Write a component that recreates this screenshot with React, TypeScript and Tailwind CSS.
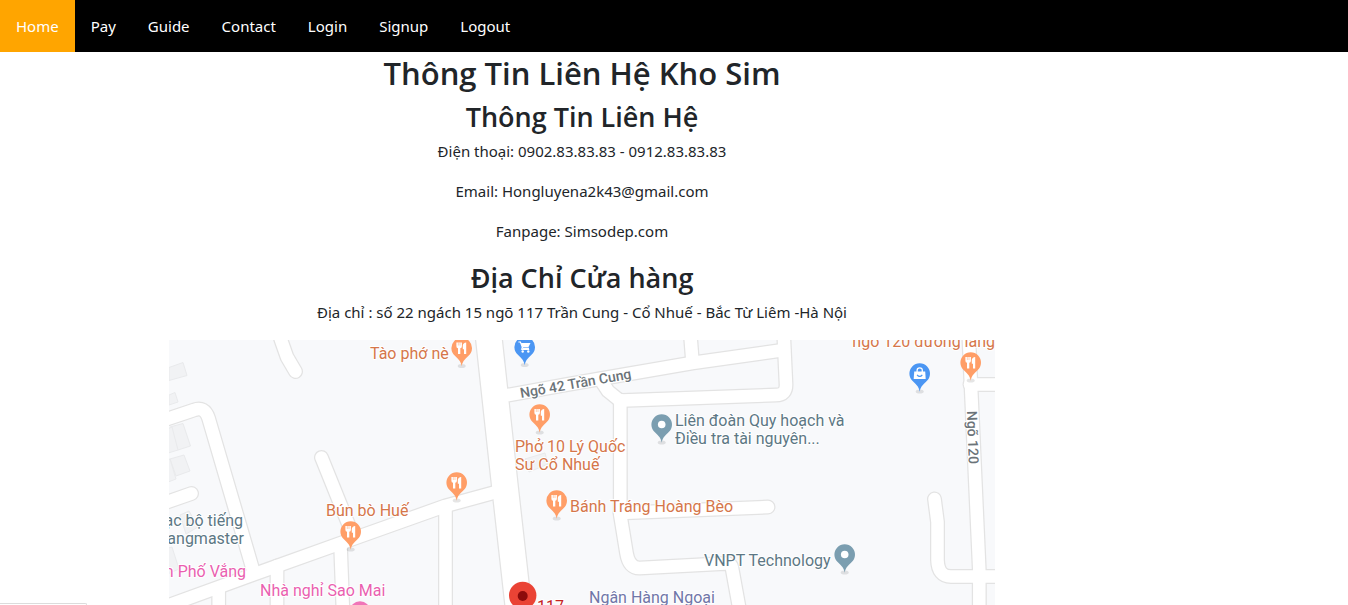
import type { ReactNode } from "react";

const NAV_ITEMS = ["Home", "Pay", "Guide", "Contact", "Login", "Signup", "Logout"];

const NARROW_ROADS = [
  "M278 330 L281 340 L287 357 L295.5 371.5",
  "M160 421.5 L194 410 Q204.500 406 208.500 418 L253 570",
  "M160 504.500 L191.500 493.500",
  "M321.500 457.500 L352 533",
  "M160 608.500 L252 575 L365 534.500 L445 506 L500 491",
  "M218.700 588 V612",
  "M277 566 V612",
  "M340.500 545 L343 612",
  "M445.500 508 V612",
  "M500 396.500 L570 384 L692 363 L784 350",
  "M690 330 L692.500 362",
  "M783.500 330 L786 384 Q786.500 395 776 395 L622 400.500",
  "M600 379 L608 391 L620.300 401",
  "M620.300 400 V515 L626.500 553 Q629 568.500 640 568 L725 563.500 Q731 563 732 568 L740 612",
  "M620 513 L768 507",
  "M968.500 330 L979.300 570 V612",
  "M970 384.500 H1004",
  "M934.500 499 L937.500 522 V560 Q938 576.500 951 576.500 H1004",
];
const WIDE_ROAD = "M486 312 L489 340 L505 487 L519 612";

const BUILDINGS = [
  "169,367.500 183,362.500 187,375.500 169,380.500",
  "169,395 175,392.500 178,402 169,405",
  "170,427 183,423.500 190.500,446 178,450",
  "165,430 172,427 178,450 165,454",
  "170,459 184,455 190,471 176,476",
  "163,461 170,459 176,479 163,484",
  "180,515 189,511 198,527 186,534",
  "165,549 172,547 179,569 165,575",
  "525,459 545,453 548,464 529,472",
];

type PinKind = "food" | "cart" | "bag" | "place";

const PIN_COLORS: Record<PinKind, string> = {
  food: "#ff9e67",
  cart: "#4b96f3",
  bag: "#4b96f3",
  place: "#7b9eb0",
};

const PIN_GLYPHS: Record<PinKind, ReactNode> = {
  food: (
    <g>
      <path d="M-5.300 -5.500 H0.200 V-1.800 Q0.200 0 -1.400 0.300 V6 H-3.700 V0.300 Q-5.300 0 -5.300 -1.800Z" fill="#fff" />
      <path d="M-3.400 -5.500 V-2.500 M-1.700 -5.500 V-2.500" stroke="#ff9e67" strokeWidth="0.500" />
      <path d="M4.500 -5.500 V6 H2.300 V1.200 H1.100 V-2.500 Q1.400 -5.200 4.500 -5.500Z" fill="#fff" />
    </g>
  ),
  cart: (
    <g>
      <path d="M-6.300 -5 H-4.300 L-1.900 1.300 H4.300" fill="none" stroke="#fff" strokeWidth="1.2" />
      <path d="M-3.800 -4 H5.800 L3.700 0.300 H-2.200Z" fill="#fff" />
      <path d="M-2.300 0 L-3.300 2.500 H4.500" fill="none" stroke="#fff" strokeWidth="1" />
      <circle cx="-2" cy="4.500" r="1.200" fill="#fff" />
      <circle cx="3.600" cy="4.500" r="1.200" fill="#fff" />
    </g>
  ),
  bag: (
    <g>
      <path d="M-5.500 -2 H5.500 L6 5.500 H-6Z" fill="#fff" />
      <path d="M-2.600 -1.500 V-3 Q-2.600 -5.600 0 -5.600 Q2.600 -5.600 2.600 -3 V-1.500" fill="none" stroke="#fff" strokeWidth="1.300" />
      <path d="M-2.600 1.300 Q0 4.600 2.600 1.300" fill="none" stroke="#4b96f3" strokeWidth="1.200" />
    </g>
  ),
  place: <circle r="3.800" fill="#fff" />,
};

const PINS: { kind: PinKind; x: number; y: number }[] = [
  { kind: "food", x: 461.7, y: 348 },
  { kind: "food", x: 539.7, y: 414.5 },
  { kind: "food", x: 456.7, y: 482.5 },
  { kind: "food", x: 556.7, y: 500.5 },
  { kind: "food", x: 350.7, y: 531.5 },
  { kind: "food", x: 970.7, y: 362.5 },
  { kind: "cart", x: 524.7, y: 347 },
  { kind: "bag", x: 919.7, y: 373.5 },
  { kind: "place", x: 661.7, y: 424.5 },
  { kind: "place", x: 844.7, y: 554.5 },
];

const ORANGE = "#d5764a";
const SLATE = "#5c7784";
const PINK = "#ea5fb0";

const LABELS: { text: string; x: number; y: number; color: string; end?: boolean }[] = [
  { text: "Tào phớ nè", x: 370, y: 359, color: ORANGE },
  { text: "ngõ 120 đường láng", x: 995, y: 347, color: ORANGE, end: true },
  { text: "Phở 10 Lý Quốc", x: 515, y: 452, color: ORANGE },
  { text: "Sư Cổ Nhuế", x: 515, y: 470, color: ORANGE },
  { text: "Bún bò Huế", x: 326, y: 516, color: ORANGE },
  { text: "Bánh Tráng Hoàng Bèo", x: 570, y: 512, color: ORANGE },
  { text: "Liên đoàn Quy hoạch và", x: 675, y: 426, color: SLATE },
  { text: "Điều tra tài nguyên...", x: 675, y: 444, color: SLATE },
  { text: "VNPT Technology", x: 704, y: 566, color: SLATE },
  { text: "ạc bộ tiếng", x: 243, y: 526, color: SLATE, end: true },
  { text: "angmaster", x: 244, y: 544, color: SLATE, end: true },
  { text: "n Phố Vắng", x: 246, y: 577, color: PINK, end: true },
  { text: "Nhà nghỉ Sao Mai", x: 260, y: 596, color: PINK },
  { text: "Ngân Hàng Ngoại", x: 589, y: 603, color: "#7076a8" },
];

function Pin({ kind, x, y }: { kind: PinKind; x: number; y: number }) {
  return (
    <g transform={`translate(${x} ${y})`}>
      <ellipse cy="18" rx="4" ry="2" fill="#000" opacity="0.1" />
      <path
        d="M0 18.300 C-0.800 13.500 -2.500 12 -6.800 7.800 A10.300 10.300 0 1 1 6.800 7.800 C2.500 12 0.800 13.500 0 18.300Z"
        fill={PIN_COLORS[kind]}
      />
      {PIN_GLYPHS[kind]}
    </g>
  );
}

function StoreMap() {
  return (
    <svg
      viewBox="169 340 826 265"
      role="img"
      aria-label="117 Trần Cung"
      className="block w-full max-w-[826px] font-['Roboto',sans-serif] text-[16px]"
    >
      <rect x="169" y="340" width="826" height="265" fill="#f8f9fb" />
      <g fill="#f1f2f4" stroke="#e9eaec" strokeWidth="1">
        {BUILDINGS.map((points) => (
          <polygon key={points} points={points} />
        ))}
      </g>
      <g fill="none" strokeLinecap="round" strokeLinejoin="round">
        <g stroke="#e3e3e3" strokeWidth="15">
          {NARROW_ROADS.map((d) => (
            <path key={d} d={d} />
          ))}
          <path d={WIDE_ROAD} strokeWidth="28" />
        </g>
        <g stroke="#fff" strokeWidth="12.500">
          {NARROW_ROADS.map((d) => (
            <path key={d} d={d} />
          ))}
          <path d={WIDE_ROAD} strokeWidth="25.500" />
        </g>
      </g>
      {PINS.map((pin) => (
        <Pin key={`${pin.x}-${pin.y}`} {...pin} />
      ))}
      <circle cx="360" cy="611.500" r="10.300" fill="#f075b8" />
      <circle cx="522.700" cy="595.500" r="13.700" fill="#ea4335" />
      <circle cx="522.700" cy="596" r="5" fill="#8c0b0b" />
      <g stroke="#fff" strokeWidth="2" strokeLinejoin="round" paintOrder="stroke">
        {LABELS.map((l) => (
          <text key={l.text} x={l.x} y={l.y} fill={l.color} textAnchor={l.end ? "end" : "start"}>
            {l.text}
          </text>
        ))}
        <text x="537" y="612" fill="#c5221f">
          117
        </text>
        <g fill="#6b7378" fontSize="14" fontWeight="500">
          <text transform="translate(521 398) rotate(-10)">Ngõ 42 Trần Cung</text>
          <text transform="translate(967 411) rotate(88)">Ngõ 120</text>
        </g>
      </g>
    </svg>
  );
}

export default function App() {
  return (
    <div className="relative min-h-screen bg-white font-['Noto_Sans',sans-serif] text-[15px] leading-6 text-[#212529]">
      <nav className="bg-black">
        <ul className="flex flex-wrap">
          {NAV_ITEMS.map((item) => (
            <li key={item}>
              <a
                href="#"
                className={`block px-4 py-3.5 text-white ${item === "Home" ? "bg-[#ffa500]" : "hover:bg-[#333333]"}`}
              >
                {item}
              </a>
            </li>
          ))}
        </ul>
      </nav>
      <main className="flex w-full max-w-[1164px] flex-col items-center text-center">
        <h2 className="mb-1.5 pt-0.5 font-['Open_Sans',sans-serif] text-[31px] leading-[38px] font-semibold">
          Thông Tin Liên Hệ Kho Sim
        </h2>
        <h3 className="mb-1.5 pt-0.5 font-['Open_Sans',sans-serif] text-[27px] leading-[33px] font-semibold">
          Thông Tin Liên Hệ
        </h3>
        <p className="mb-4">Điện thoại: 0902.83.83.83 - 0912.83.83.83</p>
        <p className="mb-4">Email: Hongluyena2k43@gmail.com</p>
        <p className="mb-4">Fanpage: Simsodep.com</p>
        <h3 className="mb-1.5 pt-0.5 font-['Open_Sans',sans-serif] text-[27px] leading-[33px] font-semibold">
          Địa Chỉ Cửa hàng
        </h3>
        <p className="mb-4">
          Địa chỉ : số 22 ngách 15 ngõ 117 Trần Cung - Cổ Nhuế - Bắc Từ Liêm -Hà Nội
        </p>
        <StoreMap />
      </main>
      <div className="absolute bottom-0 left-0 h-0.5 w-[87px] rounded-tr-sm border-t border-r border-[#dcdcdc]" />
    </div>
  );
}
